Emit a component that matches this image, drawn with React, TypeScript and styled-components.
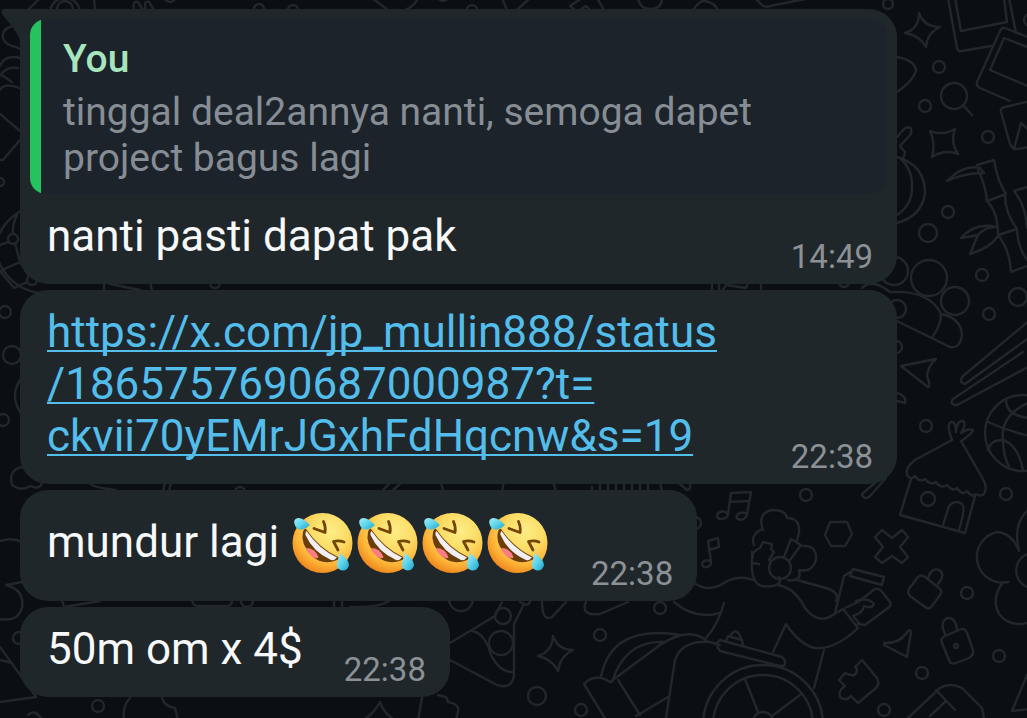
import React from "react";
import styled, { createGlobalStyle } from "styled-components";

const GlobalStyle = createGlobalStyle`
  * { box-sizing: border-box; }
  body {
    margin: 0;
    background: #0b0f13;
    font-family: Roboto, "Liberation Sans", sans-serif;
  }
`;

const Chat = styled.main`
  position: relative;
  min-height: 100vh;
  padding: 9px 20px;
  overflow: hidden;
`;

const Wallpaper = styled.svg`
  position: absolute;
  inset: 0;
  width: 100%;
  height: 100%;
  fill: none;
  stroke: #22272b;
  stroke-width: 2.4;
  stroke-linecap: round;
  stroke-linejoin: round;
`;

const Thread = styled.div`
  position: relative;
  display: flex;
  flex-direction: column;
  align-items: flex-start;
  gap: 6px;
`;

const Bubble = styled.article<{ $wide?: boolean }>`
  position: relative;
  width: ${(p) => (p.$wide ? "calc(100% - 110px)" : "auto")};
  border-radius: 28px;
  background: #20272a;
`;

const Tail = styled.svg`
  position: absolute;
  top: 0;
  left: -20px;
  width: 60px;
  height: 40px;
  fill: #20272a;
`;

const QuoteWrap = styled.div`
  position: relative;
  padding: 10px 10px 0;
`;

const Quote = styled.blockquote`
  margin: 0;
  padding: 17px 22px 13px 33px;
  border-radius: 16px;
  background: linear-gradient(to right, #24c35f 11px, #1d232a 11px);
`;

const Author = styled.cite`
  display: block;
  margin-bottom: 7px;
  color: #a6e5bd;
  font-size: 39px;
  font-style: normal;
  font-weight: 500;
  line-height: 46px;
`;

const QuoteText = styled.p`
  max-width: 740px;
  margin: 0;
  color: #868d94;
  font-size: 39px;
  line-height: 46px;
`;

const Row = styled.div`
  display: flex;
  align-items: flex-end;
  justify-content: space-between;
  gap: 41px;
  padding: 16px 24px 8px 27px;
`;

const Message = styled.p<{ $emoji?: boolean }>`
  display: flex;
  align-items: center;
  margin: 0 0 14px;
  color: #f7f8fa;
  font-size: 44px;
  line-height: ${(p) => (p.$emoji ? 73 : 52)}px;
  white-space: pre;
`;

const LinkText = styled.p`
  margin: 0 0 14px;
  font-size: 44px;
  line-height: 52px;
`;

const Link = styled.a`
  color: #53bdeb;
  text-decoration: underline;
  text-decoration-thickness: 2px;
  text-decoration-skip-ink: none;
  text-underline-offset: 3px;
`;

const Segment = styled.span`
  white-space: nowrap;
`;

const Time = styled.time`
  flex: none;
  color: #8b9195;
  font-size: 33px;
  line-height: 38px;
`;

const Face = styled.svg`
  flex: none;
  width: 65px;
  height: 62px;
`;

function Rofl() {
  return (
    <Face viewBox="0 0 65 62" role="img" aria-label="rolling on the floor laughing">
      <circle cx="32.500" cy="31" r="30" fill="url(#skin)" />
      <path d="M16 17Q29 36 48 45Q50 47 47 48Q33 54 22 44Q10 32 13 20Q14 16 16 17Z" fill="#6b3d08" />
      <path d="M16.500 19Q29 37 47 45.500Q44 49 41 48Q23 40 15.500 23Q15 20 16.500 19Z" fill="#f1eff2" />
      <path d="M16 36Q25 36 28.500 45Q28 47 25 46Q18 43 16 36Z" fill="#fb7c83" />
      <path d="M24 16.500L35 20.500Q36 15 33.500 9.500" fill="none" stroke="#744405" strokeWidth="2.800" strokeLinejoin="round" strokeLinecap="round" />
      <path d="M54 30Q49 28 43.500 29.500L48 38" fill="none" stroke="#744405" strokeWidth="2.800" strokeLinejoin="round" strokeLinecap="round" />
      <path d="M20 13Q13 5.500 8 6Q3 7 4.500 12Q6 18 12 17.500Q16 17 20 13Z" fill="url(#tear)" />
      <path d="M50 41Q59 48 59 53Q58 58.500 52 58.500Q46 57 47 51Q48 48 50 41Z" fill="url(#tear)" />
    </Face>
  );
}

function EmojiPaint() {
  return (
    <defs>
      <radialGradient id="skin" cx="0.620" cy="0.300" r="0.720">
        <stop offset="0" stopColor="#fdee87" />
        <stop offset="0.450" stopColor="#fbdb64" />
        <stop offset="0.780" stopColor="#fdb437" />
        <stop offset="1" stopColor="#f08a20" />
      </radialGradient>
      <linearGradient id="tear" x1="0" y1="0" x2="1" y2="1">
        <stop offset="0" stopColor="#a2edf7" />
        <stop offset="0.500" stopColor="#5fd3ea" />
        <stop offset="1" stopColor="#1aa5cb" />
      </linearGradient>
    </defs>
  );
}

const rings: [number, number, number][] = [
  [888, 4, 5], [939, 67, 6], [925, 106, 6], [954, 96, 13], [988, 137, 6], [948, 212, 6],
  [928, 233, 9], [894, 271, 14], [929, 278, 18], [955, 301, 14], [982, 275, 6], [1018, 297, 9],
  [989, 314, 6], [897, 309, 9], [896, 347, 6], [926, 426, 6], [1023, 433, 38], [928, 499, 7],
  [1006, 494, 6], [806, 495, 6], [695, 523, 6], [967, 593, 6], [999, 656, 6], [922, 673, 6],
  [884, 710, 6], [956, 646, 2], [780, 568, 11], [763, 725, 60], [763, 725, 50], [763, 722, 10],
  [461, 599, 12], [501, 643, 12], [503, 616, 8], [660, 608, 6], [600, 635, 6], [537, 696, 9],
  [581, 710, 6], [65, 9, 8], [65, 13, 15], [259, 9, 5], [293, 10, 5], [170, -4, 6], [0, 182, 4],
  [13, 239, 5], [32, 280, 5], [5, 312, 6], [12, 355, 9], [3, 420, 6], [19, 638, 6],
  [98, 706, 6], [247, 601, 6], [844, 282, 5], [215, 283, 5], [1030, 20, 6], [472, 10, 5],
  [443, -4, 5], [240, 492, 5],
];

const strokes = [
  // sparkles, magnifier handle, arrows
  "M919 13Q924 27 940 27Q927 33 926 47Q919 35 905 33Q919 29 919 13Z",
  "M930 131Q943 136 955 129Q950 142 958 154Q945 149 932 157Q936 143 930 131Z",
  "M553 636Q558 650 573 650Q560 656 558 671Q552 659 538 656Q552 652 553 636Z",
  "M963 105L972 115",
  "M901 366L936 359Q928 366 927 376Q931 386 928 387Z",
  "M884 643Q900 644 908 631Q910 629 911 632L907 657L884 645",
  // photo frames
  "M948 -2L957 48Q958 52 962 51L991 46M1009 -2L1016 33M955 -2L961 31L1007 22L1004 -2",
  "M1030 38L1005 28Q1002 27 1000 31L977 82Q976 86 980 88L1010 101M1030 48L1004 38L990 70L1030 87",
  "M1030 101L1005 107Q1000 108 1001 112L1010 144Q1012 149 1017 149L1030 147M1014 149L1021 123L1030 131",
  // fruit and palm
  "M897 57Q914 60 916 70Q914 80 897 92M897 137L905 128Q913 125 911 134L900 146L905 152L903 159",
  "M897 157Q925 165 925 193Q922 216 897 223M900 158Q913 170 912 188Q912 205 897 215",
  "M947 181Q964 164 980 168L984 173Q964 173 947 181M977 165L994 160Q997 180 1006 194L987 201Q986 186 978 170",
  "M987 201Q998 212 998 235M1005 195Q1005 213 1017 229L998 235Q1010 250 1011 272L1027 266M1017 230Q1018 250 1029 262",
  "M961 238Q976 222 996 227M961 238L978 235L970 254Q990 248 998 236M978 235Q984 228 994 227M1030 186L1014 191Q1026 206 1027 228",
  // skateboard and chopsticks
  "M862 288Q872 278 890 292Q930 290 941 314Q961 318 962 335Q960 349 950 347L897 321M941 314Q941 325 933 336",
  "M897 393Q907 396 905 403L897 401",
  "M1030 320L963 376Q958 382 965 384L1030 337M1023 352L953 399Q949 405 957 405L1030 366",
  // basketball
  "M988 422Q1010 432 1030 436M1006 400Q1006 416 1030 418M1030 402Q1000 415 1003 440Q1003 455 1009 467M988 450Q990 440 1003 440Q1018 445 1023 470",
  // shop
  "M952 440Q946 424 951 422Q956 421 956 432Q957 420 963 421Q967 424 961 433Q968 428 973 430Q972 434 961 441L983 479Q988 488 984 494Q981 497 976 494M952 440L915 460Q905 467 907 475",
  "M907 475Q911 481 915 476Q920 483 925 479Q931 486 936 482Q941 489 947 485Q953 492 957 488Q962 496 967 491Q972 498 976 494",
  "M911 479L900 515L965 533L975 496M943 525L949 506Q955 499 962 504Q966 508 959 530",
  "M886 478L870 496Q864 501 862 494L876 482",
  // music notes
  "M728 514L731 493L751 492L747 514M730 502L749 501M728 514Q724 509 718 513Q715 519 722 519Q728 518 728 514M747 514Q743 511 738 514Q734 519 741 520Q747 518 747 514",
  "M711 562L708 541L718 538L719 547L709 550M711 562Q706 558 702 563Q702 568 707 567Q711 566 711 562",
  "M830 522L847 522L852 534L845 546L831 546L825 535Z",
  "M882 530L892 538L902 530L908 537L900 547L908 557L902 563L892 556L882 563L875 557L883 547L875 537Z",
  // padlocks
  "M925 577L939 588Q943 591 940 595L932 606Q929 610 925 607L910 596Q907 593 909 589L918 577Q921 574 925 577ZM928 578Q932 567 939 570Q946 574 938 584",
  "M945 636L959 630Q965 627 967 633L973 650Q974 655 969 658L956 663Q951 665 949 660L942 643Q940 638 945 636ZM945 634Q939 621 948 618Q955 617 957 629",
  // flower
  "M1030 508Q1012 523 1019 551Q1012 533 997 532A25 25 0 1 0 1008 582M1003 582Q990 600 1000 615Q1010 627 1027 623M1030 553A18 18 0 0 0 1030 588",
  // puzzle, suitcase
  "M862 660L877 678Q880 684 876 688L858 703L851 696Q846 702 840 697Q838 690 845 686L839 680L845 673Q857 679 857 669L855 667Z",
  "M908 718L940 688Q950 682 962 688L982 708L984 718M936 690L955 710M930 716L946 701M1027 675L1012 711L1030 709",
  // person with phone
  "M763 530Q757 513 772 510Q786 510 787 518Q800 518 799 532L797 541M762 529Q750 535 754 545",
  "M753 558Q751 552 760 548L763 542L772 544L771 549L774 552L769 560M752 552L752 563L759 564M752 563Q751 583 762 586Q775 588 780 582L779 577",
  "M784 557L791 539L801 545L790 560M803 546Q817 545 816 560Q812 573 799 570Q802 582 788 580",
  "M694 583Q710 594 727 581Q740 575 753 580M778 585Q795 588 805 608Q818 625 833 615L843 609L858 628Q835 650 815 648Q800 645 786 624L773 652M797 580L826 588Q840 592 836 601M824 650L814 688",
  "M835 613L844 576L850 572M853 569L884 577L882 585L850 576ZM845 608L858 602L875 589Q880 588 883 593L890 602Q892 605 888 608L865 625L858 624M856 601Q868 597 874 604Q872 609 864 606Q863 613 853 616L860 624",
  "M724 603Q718 625 706 638M674 602Q695 620 720 613",
  "M720 640L782 657Q787 661 784 666L780 666L720 651Q714 644 720 640ZM726 641L728 636L742 640L743 645M730 636Q736 626 741 638M745 679L758 712M800 695L772 716",
  // chair back
  "M601 676Q612 624 680 635M612 682Q625 640 665 642M584 684Q595 672 610 682L660 645Q690 625 708 642M584 684L606 720M618 680L640 715M636 716L668 697M666 718L675 660Q682 640 710 642L720 645",
  // pizza and drops
  "M450 643L495 616L502 602M472 631Q485 633 491 655Q500 673 514 672M450 660L497 685Q512 690 514 675L514 624L524 604M520 602Q530 608 530 600M542 602Q542 622 552 617L566 602M586 602Q580 616 600 614L628 602",
  "M422 698L418 720M438 695L446 697L448 702Q460 704 458 712L456 720M364 720Q375 712 380 702Q384 714 395 720",
  // left edge
  "M28 10L40 -2M94 -2L95 10M134 10Q132 0 138 2L143 10M146 10Q143 0 149 2L154 10M12 26Q1 30 3 38Q5 45 16 47L22 50M0 66Q5 54 20 58M0 76Q6 66 18 68M0 90Q4 82 20 88M3 76L12 82",
  "M0 114L20 131M20 140L3 160L0 160M22 210Q-2 224 -5 250Q5 290 45 294M17 215Q12 225 13 234M8 242L0 245M15 243L20 262L29 276M18 263L0 271L14 288L27 282",
  "M20 380Q10 395 20 412M22 467Q8 470 12 485Q22 492 30 486Q40 490 42 483M0 541Q12 537 22 542M22 582L6 585Q25 590 22 608Q18 622 0 619M0 647L36 697L0 702M0 660L12 663M28 715Q35 708 42 720",
  "M130 698Q122 706 124 720M162 698Q165 707 175 708L178 720",
  // top edge
  "M372 -2L388 10M418 -2Q415 6 405 10M502 -2L507 10M530 -2L517 10M582 -2L570 6L575 10M597 -2L604 10M580 10L586 6L590 10M638 -2Q640 9 650 9Q662 9 662 -2M693 10Q700 0 705 1Q715 3 718 10M755 -2L762 5Q765 8 770 6L810 -2",
  // slivers between bubbles
  "M62 600L64 607L100 601M192 600Q193 606 198 606L228 606Q232 605 232 600M334 600V608M342 600V608M350 607Q380 608 390 600",
  "M104 282V291M110 284L140 290M152 290L150 282M712 282V290M719 282V290M723 290L726 285L746 288L748 282M761 282V290",
  "M89 482Q90 487 115 490M165 482L163 492M171 482L169 492M382 491L391 482M392 491L402 482M441 482L443 491M504 482L502 491M553 482L556 491M592 487V492M600 485V492M608 484V492M616 483V492M624 482V492M632 482V492M640 482V492M648 482V492M660 482L662 491M680 484L687 490Q691 490 690 484",
];

function Doodles() {
  return (
    <Wallpaper viewBox="0 0 1027 718" preserveAspectRatio="xMinYMin slice" aria-hidden="true">
      <EmojiPaint />
      {rings.map(([x, y, r], i) => (
        <circle key={i} cx={x} cy={y} r={r} />
      ))}
      {strokes.map((d, i) => (
        <path key={i} d={d} />
      ))}
    </Wallpaper>
  );
}

export default function App() {
  return (
    <>
      <GlobalStyle />
      <Chat>
        <Doodles />
        <Thread>
          <Bubble $wide>
            <Tail viewBox="0 0 60 40" aria-hidden="true">
              <path d="M5 0H60V36H21Q20 28 14 20L2 5Q0 0 5 0Z" />
            </Tail>
            <QuoteWrap>
              <Quote>
                <Author>You</Author>
                <QuoteText>tinggal deal2annya nanti, semoga dapet project bagus lagi</QuoteText>
              </Quote>
            </QuoteWrap>
            <Row>
              <Message>nanti pasti dapat pak</Message>
              <Time>14:49</Time>
            </Row>
          </Bubble>
          <Bubble $wide>
            <Row>
              <LinkText>
                <Link href="https://x.com/jp_mullin888/status/1865757690687000987?t=ckvii70yEMrJGxhFdHqcnw&s=19">
                  <Segment>https://x.com/jp_mullin888/status</Segment>
                  <wbr />
                  <Segment>/1865757690687000987?t=</Segment>
                  <wbr />
                  <Segment>ckvii70yEMrJGxhFdHqcnw&amp;s=19</Segment>
                </Link>
              </LinkText>
              <Time>22:38</Time>
            </Row>
          </Bubble>
          <Bubble>
            <Row>
              <Message $emoji>
                {"mundur lagi "}
                <Rofl />
                <Rofl />
                <Rofl />
                <Rofl />
              </Message>
              <Time>22:38</Time>
            </Row>
          </Bubble>
          <Bubble>
            <Row>
              <Message>50m om x 4$</Message>
              <Time>22:38</Time>
            </Row>
          </Bubble>
        </Thread>
      </Chat>
    </>
  );
}
